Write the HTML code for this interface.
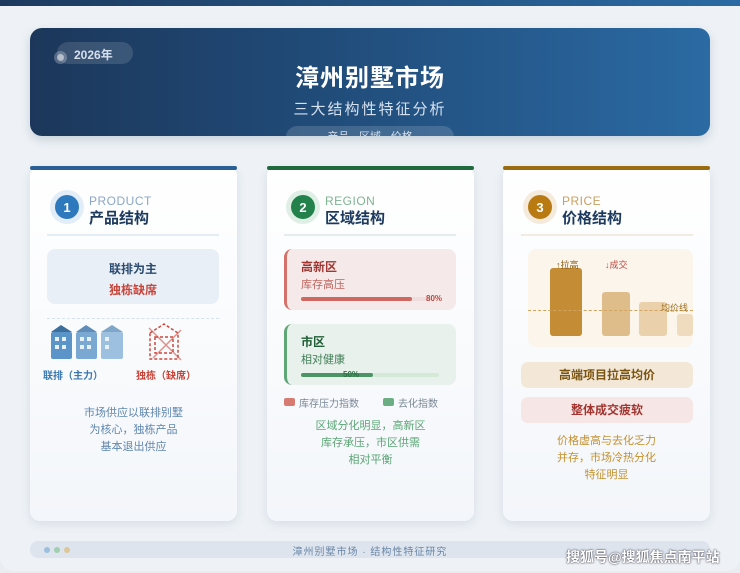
<!DOCTYPE html>
<html><head><meta charset="utf-8"><style>
*{margin:0;padding:0;box-sizing:border-box}
body{width:740px;height:573px;overflow:hidden;background:#e9edf2;font-family:"Liberation Sans","Noto Sans CJK SC",sans-serif;position:relative}
.abs{position:absolute}
.topbar{left:0;top:0;width:740px;height:6px;background:linear-gradient(90deg,#1d3a5e,#2b6aa3)}
.wrap{left:0;top:6px;width:740px;height:565px;background:#eef2f6;border-radius:0 0 14px 14px}
.hdr{left:30px;top:28px;width:680px;height:108px;border-radius:12px;background:linear-gradient(90deg,#1c375a,#204a77 40%,#2b6aa3);box-shadow:0 4px 10px rgba(30,60,100,.18);overflow:hidden}
.card{width:207px;height:355px;top:166px;border-radius:10px;background:linear-gradient(#fff,#f3f6fa);box-shadow:0 3px 10px rgba(40,70,110,.12)}
.bar{height:4px;top:166px;width:207px;border-radius:3px}
.c{text-align:center}
.num{width:34px;height:34px;border-radius:50%;display:flex;align-items:center;justify-content:center}
.num span{width:24px;height:24px;border-radius:50%;color:#fff;font-weight:bold;font-size:13px;display:flex;align-items:center;justify-content:center}
.en{font-size:12px;letter-spacing:.5px}
.ttl{font-size:15px;font-weight:bold;color:#1d3a5e}
</style></head><body>
<div class="abs topbar"></div>
<div class="abs wrap"></div>
<div class="abs hdr">
 <div class="abs" style="left:27px;top:14px;width:76px;height:22px;border-radius:11px;background:rgba(255,255,255,.13)"></div>
 <div class="abs" style="left:24px;top:23px;width:13px;height:13px;border-radius:50%;background:rgba(255,255,255,.25)"></div>
 <div class="abs" style="left:27px;top:26px;width:7px;height:7px;border-radius:50%;background:rgba(255,255,255,.5)"></div>
 <div class="abs" style="left:44px;top:18px;font-size:12px;font-weight:bold;color:#d5e0ec">2026年</div>
 <div class="abs c" style="left:0;width:680px;top:30px;font-size:24px;font-weight:bold;color:#fff;letter-spacing:1px">漳州别墅市场</div>
 <div class="abs c" style="left:0;width:680px;top:70px;font-size:15px;color:#d5e1ee;letter-spacing:2px">三大结构性特征分析</div>
 <div class="abs c" style="left:256px;top:98px;width:168px;height:22px;border-radius:11px;background:rgba(255,255,255,.15);font-size:11px;color:#d5e1ee;padding-top:2px">产品 · 区域 · 价格</div>
</div>

<!-- card 1 -->
<div class="abs card" style="left:30px"></div>
<div class="abs bar" style="left:30px;background:#2a5f95"></div>
<div class="abs num" style="left:50px;top:190px;background:#e3edf7"><span style="background:#2e78bd">1</span></div>
<div class="abs en" style="left:89px;top:194px;color:#8aa6c6">PRODUCT</div>
<div class="abs ttl" style="left:89px;top:207px">产品结构</div>
<div class="abs" style="left:47px;top:234px;width:172px;height:2px;background:#e4ecf4"></div>
<div class="abs c" style="left:47px;top:249px;width:172px;height:55px;border-radius:8px;background:#e8eff7">
 <div style="font-size:12px;font-weight:bold;color:#2a4a6e;margin-top:11px">联排为主</div>
 <div style="font-size:12px;font-weight:bold;color:#c8453a;margin-top:4px">独栋缺席</div>
</div>
<div class="abs" style="left:47px;top:318px;width:172px;border-top:1px dashed #d5e1ec"></div>
<svg class="abs" style="left:50px;top:322px" width="80" height="40">
 <path d="M1 10 L11 3 L22 10Z" fill="#3e6e9c"/><rect x="1" y="10" width="21" height="27" rx="2" fill="#5a94c8"/>
 <path d="M26 10 L36 3 L47 10Z" fill="#5f8db8"/><rect x="26" y="10" width="21" height="27" rx="2" fill="#7aa8d2"/>
 <path d="M51 10 L62 3 L73 10Z" fill="#7fa5c8"/><rect x="51" y="10" width="22" height="27" rx="2" fill="#9dc0e0"/>
 <g fill="#e8f1fa"><rect x="5" y="15" width="4" height="4"/><rect x="12" y="15" width="4" height="4"/><rect x="5" y="23" width="4" height="4"/><rect x="12" y="23" width="4" height="4"/>
 <rect x="30" y="15" width="4" height="4"/><rect x="37" y="15" width="4" height="4"/><rect x="30" y="23" width="4" height="4"/><rect x="37" y="23" width="4" height="4"/>
 <rect x="55" y="15" width="4" height="4"/><rect x="55" y="23" width="4" height="4"/></g>
</svg>
<svg class="abs" style="left:147px;top:322px" width="40" height="40" fill="none" stroke="#cc4b40" stroke-width="1.5" stroke-dasharray="3 2">
 <path d="M3 11 L17 2 L31 11 V37 H3Z"/><rect x="8" y="15" width="18" height="16"/><path d="M2 6 L34 38 M34 8 L6 36" stroke-dasharray="none" stroke-opacity=".6"/>
</svg>
<div class="abs" style="left:43px;top:367px;font-size:10px;font-weight:bold;color:#3a78b0">联排（主力）</div>
<div class="abs" style="left:136px;top:367px;font-size:10px;font-weight:bold;color:#c8453a">独栋（缺席）</div>
<div class="abs c" style="left:30px;width:207px;top:405px;font-size:11px;line-height:17px;color:#5f86ae">市场供应以联排别墅<br>为核心，独栋产品<br>基本退出供应</div>

<!-- card 2 -->
<div class="abs card" style="left:267px"></div>
<div class="abs bar" style="left:267px;background:#1f6b3e"></div>
<div class="abs num" style="left:286px;top:190px;background:#e0efe6"><span style="background:#23824b">2</span></div>
<div class="abs en" style="left:325px;top:194px;color:#7fb493">REGION</div>
<div class="abs ttl" style="left:325px;top:207px">区域结构</div>
<div class="abs" style="left:284px;top:234px;width:172px;height:2px;background:#e4ecee"></div>
<div class="abs" style="left:284px;top:249px;width:172px;height:61px;border-radius:8px;background:#f6e9e9;border-left:3px solid #d4726a">
 <div class="abs" style="left:14px;top:9px;font-size:12px;font-weight:bold;color:#a33530">高新区</div>
 <div class="abs" style="left:14px;top:27px;font-size:11px;color:#c0635c">库存高压</div>
 <div class="abs" style="left:14px;top:48px;width:130px;height:4px;border-radius:2px;background:#efdcdc"><div style="width:85%;height:4px;border-radius:2px;background:#cf6861"></div></div>
 <div class="abs" style="left:139px;top:45px;font-size:8px;font-weight:bold;color:#c0453e">80%</div>
</div>
<div class="abs" style="left:284px;top:324px;width:172px;height:61px;border-radius:8px;background:#e8f1ec;border-left:3px solid #5fa677">
 <div class="abs" style="left:14px;top:9px;font-size:12px;font-weight:bold;color:#1f5e36">市区</div>
 <div class="abs" style="left:14px;top:27px;font-size:11px;color:#3f7d55">相对健康</div>
 <div class="abs" style="left:14px;top:49px;width:138px;height:4px;border-radius:2px;background:#d4ead9"><div style="width:52%;height:4px;border-radius:2px;background:#4c9466"></div></div>
 <div class="abs" style="left:56px;top:46px;font-size:8px;font-weight:bold;color:#2f7048">50%</div>
</div>
<div class="abs" style="left:284px;top:398px;width:11px;height:8px;border-radius:2px;background:#d77b72"></div>
<div class="abs" style="left:299px;top:395px;font-size:10px;color:#7a8896">库存压力指数</div>
<div class="abs" style="left:383px;top:398px;width:11px;height:8px;border-radius:2px;background:#6cae83"></div>
<div class="abs" style="left:398px;top:395px;font-size:10px;color:#7a8896">去化指数</div>
<div class="abs c" style="left:267px;width:207px;top:418px;font-size:11px;line-height:17px;color:#5aa575">区域分化明显，高新区<br>库存承压，市区供需<br>相对平衡</div>

<!-- card 3 -->
<div class="abs card" style="left:503px"></div>
<div class="abs bar" style="left:503px;background:#9a6b10"></div>
<div class="abs num" style="left:523px;top:190px;background:#f4ebdd"><span style="background:#b97a12">3</span></div>
<div class="abs en" style="left:562px;top:194px;color:#c8a060">PRICE</div>
<div class="abs ttl" style="left:562px;top:207px">价格结构</div>
<div class="abs" style="left:521px;top:234px;width:172px;height:2px;background:#f2ebe2"></div>
<div class="abs" style="left:528px;top:249px;width:165px;height:98px;border-radius:8px;background:#fbf5ec"></div>
<div class="abs" style="left:550px;top:268px;width:32px;height:68px;border-radius:3px;background:#c48c35"></div>
<div class="abs" style="left:602px;top:292px;width:28px;height:44px;border-radius:3px;background:#dfbd8a"></div>
<div class="abs" style="left:639px;top:302px;width:28px;height:34px;border-radius:3px;background:#ead1ab"></div>
<div class="abs" style="left:677px;top:314px;width:16px;height:22px;border-radius:3px;background:#efdcbf"></div>
<div class="abs" style="left:528px;top:310px;width:165px;border-top:1.5px dashed #d1a460"></div>
<div class="abs" style="left:556px;top:258px;font-size:9px;color:#8a5a10">↑拉高</div>
<div class="abs" style="left:605px;top:258px;font-size:9px;color:#c0453e">↓成交</div>
<div class="abs" style="left:661px;top:301px;font-size:9px;color:#a0701c">均价线</div>
<div class="abs c" style="left:521px;top:362px;width:172px;height:26px;border-radius:7px;background:#f3e8d8;font-size:12px;font-weight:bold;color:#7a5410;line-height:26px">高端项目拉高均价</div>
<div class="abs c" style="left:521px;top:397px;width:172px;height:26px;border-radius:7px;background:#f6e6e6;font-size:12px;font-weight:bold;color:#a33530;line-height:26px">整体成交疲软</div>
<div class="abs c" style="left:503px;width:207px;top:433px;font-size:11px;line-height:17px;color:#c4912e">价格虚高与去化乏力<br>并存，市场冷热分化<br>特征明显</div>

<!-- footer -->
<div class="abs" style="left:30px;top:541px;width:680px;height:17px;border-radius:8px;background:#dde4ee"></div>
<div class="abs" style="left:44px;top:547px;width:6px;height:6px;border-radius:50%;background:#9bbfdc"></div>
<div class="abs" style="left:54px;top:547px;width:6px;height:6px;border-radius:50%;background:#9fcfae"></div>
<div class="abs" style="left:64px;top:547px;width:6px;height:6px;border-radius:50%;background:#dcc69a"></div>
<div class="abs c" style="left:30px;width:680px;top:543px;font-size:10px;color:#6a86a6;letter-spacing:1px">漳州别墅市场 · 结构性特征研究</div>
<div class="abs" style="left:566px;top:547px;font-size:14px;font-weight:bold;color:#fff;text-shadow:0 0 2px #556,0 0 1px #333">搜狐号@搜狐焦点南平站</div>
</body></html>
